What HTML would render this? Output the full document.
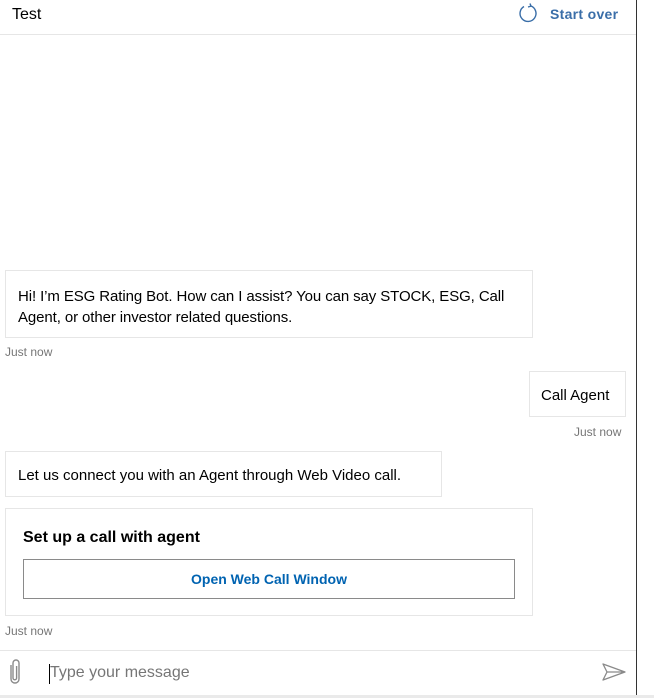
<!DOCTYPE html>
<html><head><meta charset="utf-8"><style>
body{margin:0;width:654px;height:698px;background:#fff;font-family:"Segoe UI","Liberation Sans",sans-serif;position:relative;overflow:hidden;color:#000}
.a{position:absolute}
.bub{position:absolute;border:1px solid #e6e6e6;background:#fff;font-size:15px;line-height:21px;box-sizing:border-box}
.ts{position:absolute;font-size:12px;color:#767676}
</style></head><body>
<div class="a" style="left:636px;top:0;width:1px;height:695px;background:#333"></div>
<div class="a" style="left:0;top:695px;width:654px;height:3px;background:#eaeaea"></div>
<div class="a" style="left:12px;top:6px;font-size:16px">Test</div>
<svg class="a" style="left:517px;top:2px" width="22" height="22" viewBox="0 0 22 22"><path d="M7 4.5 A8 8 0 1 0 14 4" fill="none" stroke="#3a6ea8" stroke-width="1.4"/><path d="M13 1.5 L14 4.2 L11 5" fill="none" stroke="#3a6ea8" stroke-width="1.4"/></svg>
<div class="a" style="left:550px;top:6px;font-size:14px;color:#3a6ea8;font-weight:600;letter-spacing:0.3px">Start over</div>
<div class="a" style="left:0;top:34px;width:636px;height:1px;background:#e6e6e6"></div>

<div class="bub" style="left:5px;top:270px;width:528px;height:68px;padding:15px 12px 0 12px;letter-spacing:-0.1px">Hi! I’m ESG Rating Bot. How can I assist? You can say STOCK, ESG, Call Agent, or other investor related questions.</div>
<div class="ts" style="left:5px;top:345px">Just now</div>
<div class="bub" style="left:529px;top:371px;width:97px;height:46px;padding:13px 11px 0 11px">Call Agent</div>
<div class="ts" style="left:574px;top:425px">Just now</div>
<div class="bub" style="left:5px;top:451px;width:437px;height:46px;padding:13px 12px 0 12px">Let us connect you with an Agent through Web Video call.</div>
<div class="bub" style="left:5px;top:508px;width:528px;height:108px"></div>
<div class="a" style="left:23px;top:529px;font-size:16px;font-weight:bold">Set up a call with agent</div>
<div class="a" style="left:23px;top:559px;width:492px;height:40px;border:1px solid #8a8a8a;box-sizing:border-box;text-align:center;line-height:38px;font-size:14px;font-weight:600;color:#0063b1">Open Web Call Window</div>
<div class="ts" style="left:5px;top:624px">Just now</div>

<div class="a" style="left:0;top:650px;width:636px;height:1px;background:#e6e6e6"></div>
<svg class="a" style="left:7px;top:658px" width="16" height="28" viewBox="0 0 16 28"><path d="M4 7 V21 A4 4 0 0 0 12 21 V5 A3 3 0 0 0 6 5 V20 A1.8 1.8 0 0 0 9.6 20 V8" fill="none" stroke="#8a8a8a" stroke-width="1.4"/></svg>
<div class="a" style="left:49px;top:664px;width:1px;height:20px;background:#000"></div>
<div class="a" style="left:50px;top:664px;font-size:16px;color:#767676">Type your message</div>
<svg class="a" style="left:601px;top:661px" width="26" height="22" viewBox="0 0 26 22"><path d="M2 3 L24 11 L2 19 L6 11 Z M6 11 H24" fill="none" stroke="#8a8a8a" stroke-width="1.3" stroke-linejoin="round"/></svg>
</body></html>
